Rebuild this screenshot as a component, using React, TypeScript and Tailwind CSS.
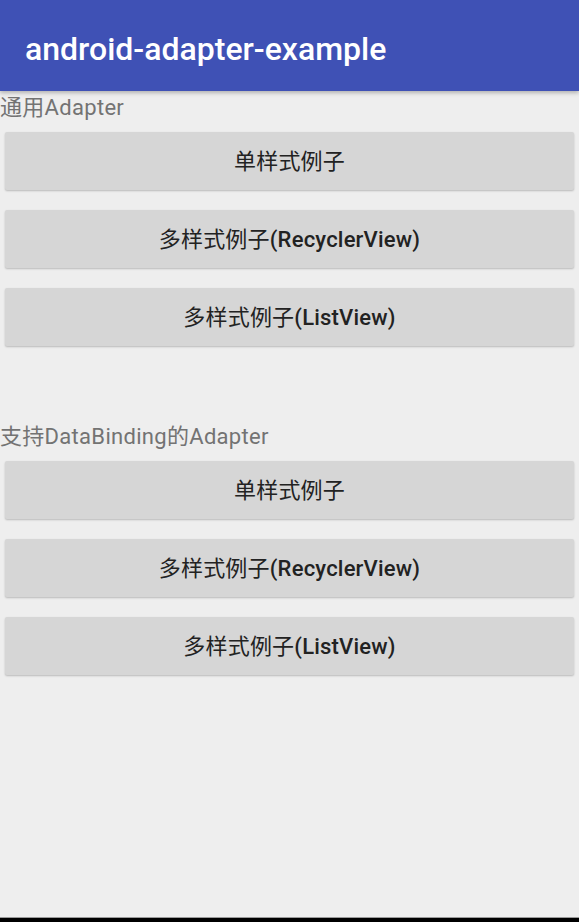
const sections = [
  {
    title: '通用Adapter',
    buttons: ['单样式例子', '多样式例子(RecyclerView)', '多样式例子(ListView)'],
  },
  {
    title: '支持DataBinding的Adapter',
    buttons: ['单样式例子', '多样式例子(RecyclerView)', '多样式例子(ListView)'],
  },
];

const font = "font-['Roboto','Noto_Sans_CJK_SC',sans-serif]";

// CJK part renders regular weight, latin part medium (as on the device)
function Label({ text }: { text: string }) {
  const i = text.indexOf('(');
  if (i < 0) return <span className="font-normal">{text}</span>;
  return (
    <>
      <span className="font-normal">{text.slice(0, i)}</span>
      <span className="font-medium">{text.slice(i)}</span>
    </>
  );
}

export default function App() {
  return (
    <div className={`flex h-[922px] w-[579px] flex-col bg-[#eeeeee] ${font}`}>
      {/* toolbar */}
      <header className="relative z-10 flex h-[91px] shrink-0 items-center bg-[#3f51b5] px-[25px] pt-[6px] shadow-[0_2px_4px_rgba(0,0,0,0.25)]">
        <h1 className="text-[32px] font-medium leading-none text-white">android-adapter-example</h1>
      </header>

      <main className="flex flex-1 flex-col gap-[78px] pt-[4px]">
        {sections.map((s) => (
          <section key={s.title} className="flex flex-col">
            <div className="h-[26px] text-[22px] leading-[26px] tracking-[0.3px] text-[#737373]">{s.title}</div>
            <div className="mt-[11px] flex flex-col gap-[20px] px-[5px]">
              {s.buttons.map((b) => (
                <button
                  key={b}
                  className="flex h-[58px] items-center justify-center rounded-[2px] bg-[#d6d6d6] text-[22px] tracking-[0.2px] text-[#222222] shadow-[0_1px_2px_rgba(0,0,0,0.22)]"
                >
                  <Label text={b} />
                </button>
              ))}
            </div>
          </section>
        ))}
      </main>

      <div className="h-[5px] shrink-0 border-t border-[#9a9a9a] bg-black" />
    </div>
  );
}
